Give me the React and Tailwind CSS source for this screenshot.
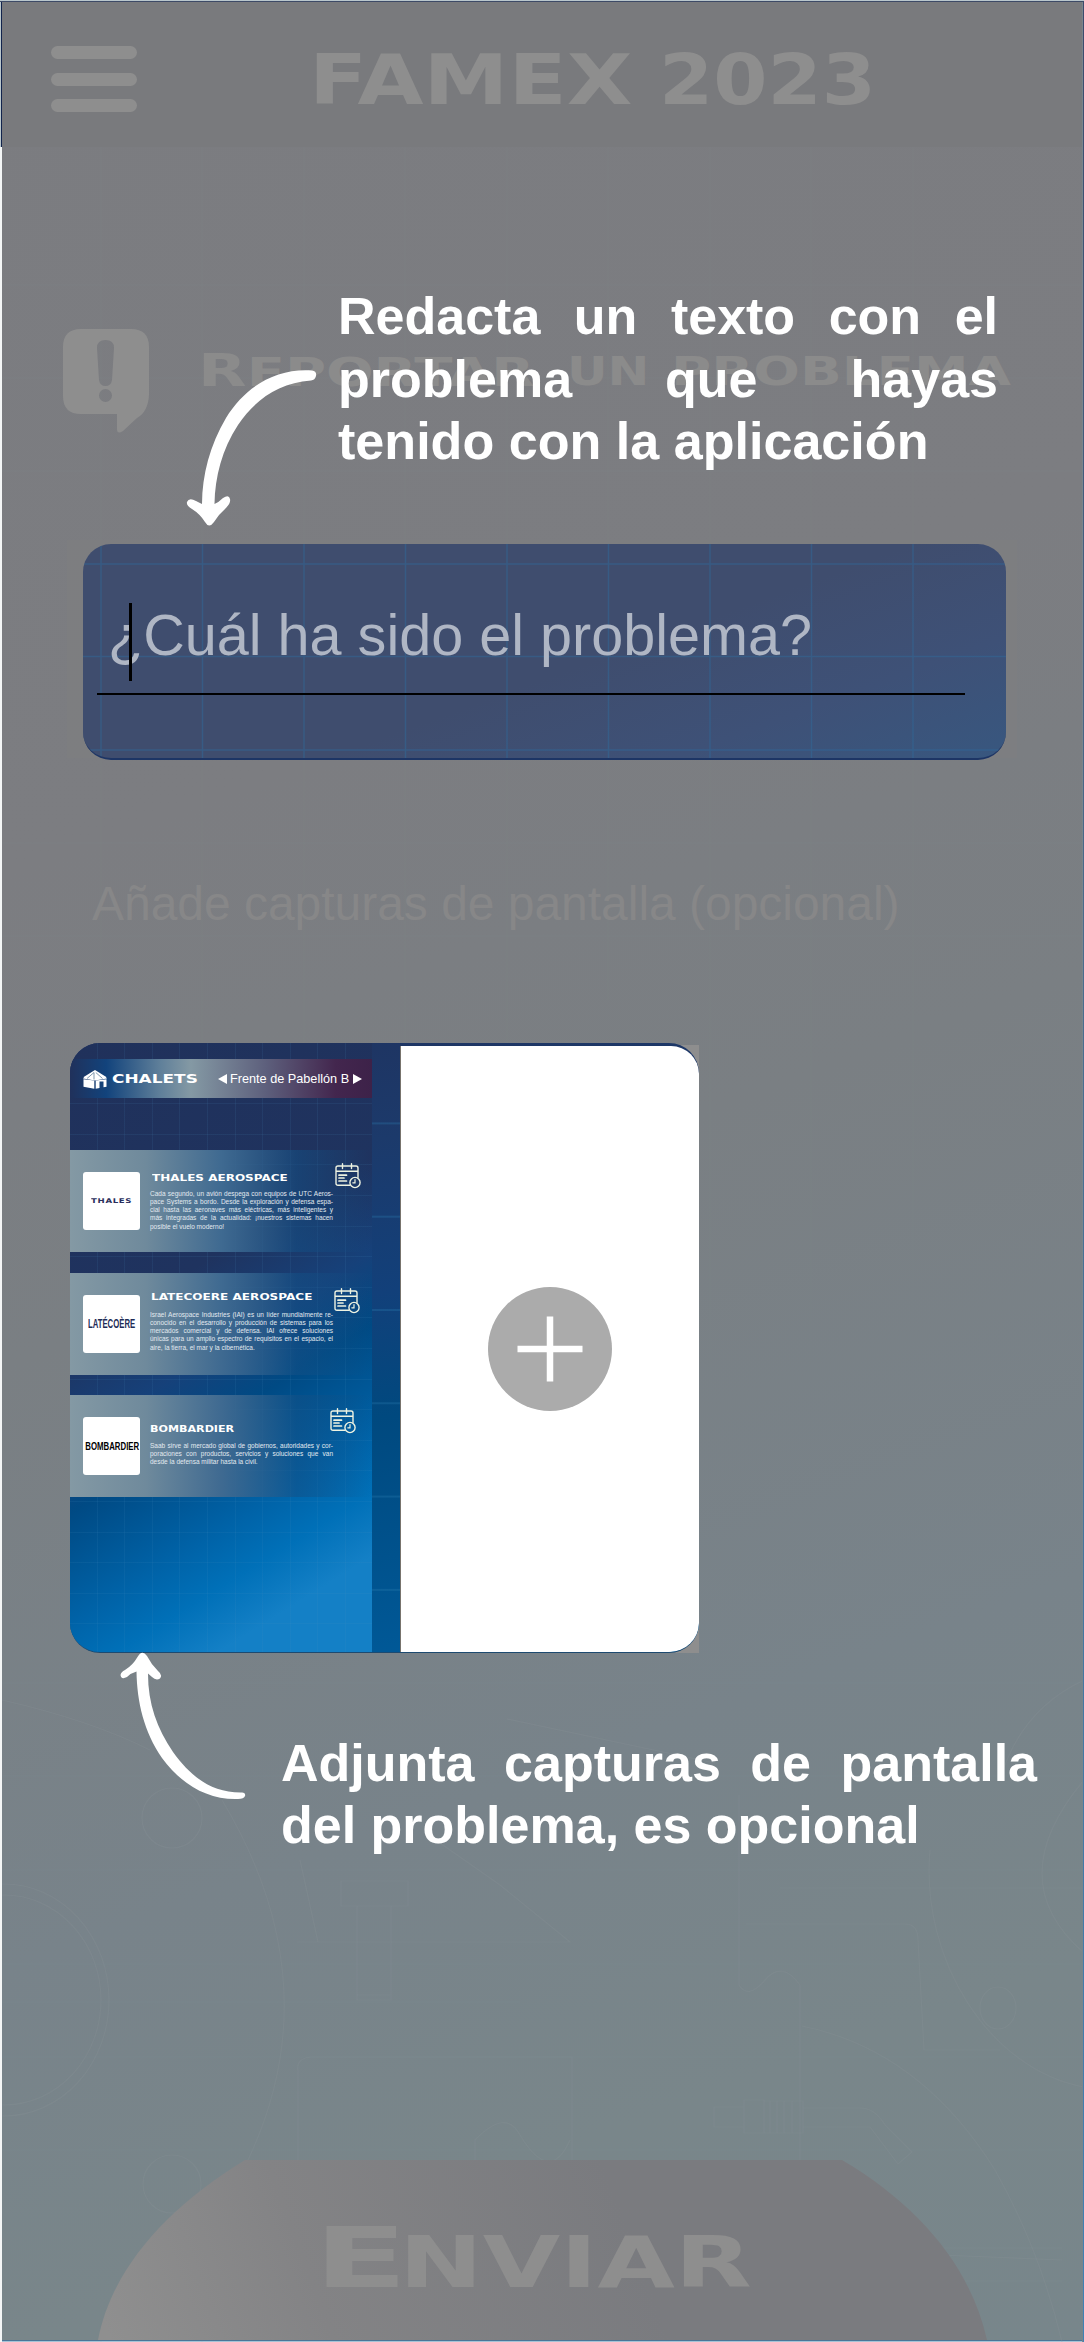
import { useLayoutEffect, useRef, useState } from "react";

/* One line of text stretched horizontally to an exact width. */
function Fit({ width, className = "", children }) {
  const ref = useRef(null);
  const [scale, setScale] = useState(1);
  useLayoutEffect(() => {
    const w = ref.current.offsetWidth;
    if (w) setScale(width / w);
  }, [width]);
  return (
    <span className="block shrink-0" style={{ width }}>
      <span
        ref={ref}
        className={`block w-max origin-left whitespace-nowrap ${className}`}
        style={{ transform: `scaleX(${scale})` }}
      >
        {children}
      </span>
    </span>
  );
}

const wide = "font-['DejaVu_Sans',sans-serif] font-bold";

function BlueprintLines() {
  return (
    <svg className="absolute inset-0" width="1084" height="2342" fill="none" stroke="#8d989c" strokeOpacity="0.22" strokeWidth="1.2">
      <path d="M101 147V2342M202 147V2342M304 147V2080M405 147V1960M507 147V1640M608 147V1000M710 147V1700M811 147V2160M913 147V2160" strokeOpacity="0.08" />
      <path d="M2 285H1082M2 378H1082M2 471H1082M2 843H1082M2 936H1082M2 1683H1082M2 1776H1082M2 1870H1082M2 1964H1082M2 2002H520M2 2057H1082M2 2150H1082" strokeOpacity="0.09" />
      <ellipse cx="4" cy="2000" rx="105" ry="116" />
      <ellipse cx="4" cy="2000" rx="97" ry="105" />
      <circle cx="172" cy="1818" r="30" />
      <circle cx="172" cy="2184" r="29" />
      <path d="M2 1700Q90 1720 150 1750M222 1800C300 1930 300 2050 248 2160M300 1860L318 1942M298 2161V2070Q296 2059 310 2057H572V2161" />
      <path d="M341 1881H408V1906H341ZM357 1906V2000H391V1906M357 1995H391M507 1719L715 1763M440 1843L500 1885L570 1942H297" />
      <path d="M475 2161V2140Q506 2108 520 2135Q550 2185 570 2140" />
      <path d="M739 1795V1985Q748 2000 765 1980Q782 1960 800 1985V2161M746 1924H905Q918 1924 918 1940L924 2050H1000M780 1888H1082M930 1850C920 1960 990 2070 1084 2087M802 2026Q920 2050 995 2170Q1040 2250 1062 2342" />
      <path d="M714 2107H744V2127H714ZM744 2100H764V2133H744ZM764 2101H803V2133H764ZM770 2101V2133M777 2101V2133M784 2101V2133M792 2101V2133M803 2108H860Q875 2108 885 2125L912 2152L898 2164L870 2127H803" />
      <ellipse cx="998" cy="2008" rx="18" ry="21" />
      <path d="M1084 1680Q1020 1710 1000 1780M1084 1780Q1000 1880 1084 1953M940 2248H1062M940 2255L1062 2260M958 2281H1062" />
    </svg>
  );
}

function CalendarIcon({ className }) {
  return (
    <svg className={className} width="27" height="26" viewBox="0 0 27 26" fill="none" stroke="#eef3e2" strokeWidth="1.4" strokeLinecap="round">
      <path d="M15 22.3H3Q1 22.3 1 20.3V5Q1 3 3 3H21Q23 3 23 5V14.5M1 8.2H23M7.5 .8V5.5M16.5 .8V5.5" />
      <path d="M4 12.2H11.5M4 15H9M4 18H11.5" strokeWidth="1.7" />
      <circle cx="20" cy="19.5" r="5.1" />
      <path d="M20 16.5V19.8H17.8" strokeWidth="1.2" />
    </svg>
  );
}

const cards = [
  {
    logo: "THALES",
    logoClass: "text-[6.5px] leading-[10px] tracking-[0.5px] text-[#2a2f5c] font-['DejaVu_Sans',sans-serif] font-bold",
    logoWidth: 41,
    title: "THALES AEROSPACE",
    titleWidth: 136,
    body: "pt-[22px]",
    pad: "pl-[2px]",
    icon: "left-[265px] top-[13px]",
    lines: [
      "Cada segundo, un avión despega con equipos de UTC Aeros-",
      "pace Systems a bordo. Desde la exploración y defensa espa-",
      "cial hasta las aeronaves más eléctricas, más inteligentes y",
      "más integradas de la actualidad: ¡nuestros sistemas hacen",
      "posible el vuelo moderno!",
    ],
    gap: "mt-[6px]",
  },
  {
    logo: "LATÉCOÈRE",
    logoClass: "text-[13px] leading-[14px] text-[#1e2c57] font-['Liberation_Sans',sans-serif] font-bold",
    logoWidth: 47,
    title: "LATECOERE AEROSPACE",
    titleWidth: 162,
    body: "pt-[18px]",
    pad: "pl-[1px]",
    icon: "left-[264px] top-[15px]",
    lines: [
      "Israel Aerospace Industries (IAI) es un líder mundialmente re-",
      "conocido en el desarrollo y producción de sistemas para los",
      "mercados comercial y de defensa. IAI ofrece soluciones",
      "únicas para un amplio espectro de requisitos en el espacio, el",
      "aire, la tierra, el mar y la cibernética.",
    ],
    gap: "mt-[8.5px]",
  },
  {
    logo: "BOMBARDIER",
    logoClass: "pl-[2px] text-[11.5px] leading-[14px] text-black font-['Liberation_Sans',sans-serif] font-bold",
    logoWidth: 55,
    title: "BOMBARDIER",
    titleWidth: 84,
    body: "pt-[28px]",
    pad: "pl-0",
    icon: "left-[260px] top-[13px]",
    lines: [
      "Saab sirve al mercado global de gobiernos, autoridades y cor-",
      "poraciones con productos, servicios y soluciones que van",
      "desde la defensa militar hasta la civil.",
    ],
    gap: "mt-[7px]",
  },
];

function ChaletCard({ c }) {
  return (
    <div className="relative flex h-[102px] w-[302px] bg-[linear-gradient(90deg,#8499a4_0%,#6f8a9c_25%,#3f6a91_50%,#13508688_75%,#0a4a8400_100%)]">
      <div className="ml-[13px] mt-[22px] flex h-[58px] w-[57px] items-center justify-center rounded-[3px] bg-white">
        <Fit width={c.logoWidth} className={c.logoClass}>{c.logo}</Fit>
      </div>
      <div className={`ml-[10px] flex w-[183px] flex-col ${c.body}`}>
        <div className={c.pad}>
          <Fit width={c.titleWidth} className={`${wide} text-[9px] leading-[12px] text-white`}>{c.title}</Fit>
        </div>
        <div className={`flex flex-col font-['Liberation_Sans',sans-serif] text-[6.5px] leading-[8.15px] text-[#e3eaf0] ${c.gap}`}>
          {c.lines.map((l, i) => (
            <div key={i} className={i < c.lines.length - 1 ? "whitespace-nowrap [text-align-last:justify]" : "whitespace-nowrap"}>{l}</div>
          ))}
        </div>
      </div>
      <CalendarIcon className={`absolute ${c.icon}`} />
    </div>
  );
}

function Screenshot() {
  return (
    <div className="relative flex w-[302px] flex-col bg-[linear-gradient(148deg,#20315b_0%,#1f335f_38%,#16417a_50%,#004a84_59%,#0063a8_73%,#0070b8_80%,#1480c6_88%)]">
      <div className="absolute inset-0 bg-[repeating-linear-gradient(90deg,transparent_0_26.6px,#4a90c01c_26.6px_27.6px),repeating-linear-gradient(180deg,transparent_0_29.6px,#4a90c01c_29.6px_30.6px)]" />
      <div className="relative mt-[16px] flex h-[39px] items-center bg-[linear-gradient(90deg,#20315b_0%,#12437c_12%,#60809a_30%,#8499a4_40%,#5d5f7c_65%,#43264e_88%,#3d2249_100%)] pl-[13px]">
        <svg className="mt-[2px]" width="24" height="19" viewBox="0 0 24 19" fill="#fff">
          <path d="M12 0L22.500 6.500L24 8.500L12 10.500L0 8.500L1.500 6.500Z" />
          <path d="M.5 9.2L11.300 10.500V18.700L.5 16.800ZM12.700 10.500L23.500 9.200V16.800L20.500 17.300V11.500H16.500V18L12.700 18.700Z" />
          <path d="M4 8.500L11 2.500V9.500M12.800 2.500L19.500 8.500" stroke="#5f7f9b" strokeWidth=".8" fill="none" />
        </svg>
        <div className="ml-[5px] mt-px">
          <Fit width={86} className={`${wide} text-[13px] leading-[18px] text-white`}>CHALETS</Fit>
        </div>
        <svg className="ml-[20px]" width="9" height="10" viewBox="0 0 9 10" fill="#fff"><path d="M0 5L9 0V10Z" /></svg>
        <div className="ml-[3px]">
          <Fit width={119} className="font-['Liberation_Sans',sans-serif] text-[13px] leading-[18px] text-white">Frente de Pabellón B</Fit>
        </div>
        <svg className="ml-[4px]" width="9" height="10" viewBox="0 0 9 10" fill="#fff"><path d="M9 5L0 0V10Z" /></svg>
      </div>
      <div className="relative mt-[52px] flex flex-col gap-[20.5px]">
        {cards.map((c) => <ChaletCard key={c.title} c={c} />)}
      </div>
    </div>
  );
}

export default function App() {
  return (
    <div className="relative flex h-[2342px] w-[1084px] flex-col overflow-hidden bg-[linear-gradient(160deg,#7b7c80_0%,#7c7d81_32%,#7a7f83_50%,#78838a_72%,#79868a_86%,#78868b_100%)] font-['Liberation_Sans',sans-serif]">
      <BlueprintLines />

      <header className="relative flex h-[147px] shrink-0 items-start bg-[#797a7d]">
        <div className="ml-[51px] mt-[46px] flex w-[86px] flex-col gap-[13.5px]">
          <div className="h-[13px] rounded-full bg-[#8e8e8e]" />
          <div className="h-[13px] rounded-full bg-[#8e8e8e]" />
          <div className="h-[13px] rounded-full bg-[#8e8e8e]" />
        </div>
        <div className="ml-[172px] mt-[40px] flex gap-[26px]">
          <Fit width={324} className={`${wide} text-[69px] leading-[80px] text-[#8e8e8e]`}>FAMEX</Fit>
          <Fit width={217} className={`${wide} text-[69px] leading-[80px] text-[#8e8e8e]`}>2023</Fit>
        </div>
      </header>

      <section className="relative mt-[182px] flex h-[105px] shrink-0 items-start pl-[63px]">
        <svg width="86" height="104" viewBox="0 0 86 104" fill="#8e8e8e">
          <path fillRule="evenodd" d="M18 0H68Q86 0 86 18V66Q85 83 74 89L60 102Q54 106 54 100V85H18Q0 85 0 67V18Q0 0 18 0ZM34 19Q34 11 42.500 11Q51 11 51 19L49 51Q48 57 42.500 57Q37 57 36 51ZM42.500 60A6.500 6.500 0 1 0 42.500 73A6.500 6.500 0 1 0 42.500 60Z" />
        </svg>
        <div className={`ml-[49px] mt-[16px] flex ${wide} leading-[52px] text-[#8b8b8b]`}>
          <Fit width={336} className="text-[39px]"><span className="text-[44px]">R</span>EPORTAR</Fit>
          <span className="w-[33px]" />
          <Fit width={82} className="text-[39px] pt-[1px]">UN</Fit>
          <span className="w-[22px]" />
          <Fit width={340} className="text-[39px] pt-[1px]">PROBLEMA</Fit>
        </div>
      </section>

      <section className="relative ml-[67px] mt-[106px] h-[218px] w-[950px] shrink-0 bg-[#7f7f81]/60 pl-[16px] pt-[4px]">
        <div className="relative flex h-[216px] w-[923px] flex-col overflow-hidden rounded-[28px] border-b-2 border-[#1d3565] bg-[linear-gradient(160deg,#3f4d6e_0%,#3f4d6e_55%,#3e5177_78%,#38577f_100%)]">
          <svg className="absolute inset-0" width="923" height="216" stroke="#2f6a99" strokeOpacity=".5" strokeWidth="1.5">
            <path d="M18 0V216M119.500 0V216M221 0V216M322.500 0V216M424 0V216M525.500 0V216M627 0V216M728.500 0V216M830 0V216M0 20H923M0 112.500H923M0 206H923" />
          </svg>
          <div className="relative ml-[25px] mt-[51px] h-[80px]">
            <Fit width={704} className="text-[57px] leading-[80px] text-[#afb6c4]">¿Cuál ha sido el problema?</Fit>
            <div className="absolute left-[21px] top-[8px] h-[78px] w-[3px] bg-black" />
          </div>
          <div className="relative ml-[14px] mt-[17.500px] h-[2.500px] w-[868px] bg-black" />
        </div>
      </section>

      <div className="relative ml-[92px] mt-[116px] h-[60px] shrink-0">
        <Fit width={808} className="text-[48px] leading-[60px] text-[#878788]">Añade capturas de pantalla (opcional)</Fit>
      </div>

      <section className="relative ml-[70px] mt-[109px] flex h-[610px] w-[629px] shrink-0 rounded-l-[30px] bg-[linear-gradient(180deg,transparent_0_2px,#8e8e8e_2px)]">
        <div className="flex h-[610px] w-[629px] overflow-hidden rounded-[30px] border-b-[1.5px] border-b-[#1d4a70] bg-[linear-gradient(172deg,#1f3360_0%,#1c3a6b_20%,#12407a_42%,#00497f_60%,#005b9b_100%)]">
          <Screenshot />
          <div className="h-full w-[28px] bg-[repeating-linear-gradient(180deg,transparent_0_79.500px,#2b7db04d_79.500px_81px,transparent_81px_93.300px)] [background-size:28px_93.300px]" />
          <div className="mt-[2.500px] flex flex-1 items-center justify-center rounded-r-[28px] border-l border-[#77736c] bg-white">
            <svg width="124" height="124" viewBox="0 0 124 124">
              <circle cx="62" cy="62" r="62" fill="#ababab" />
              <path d="M29.500 62H94.500M62 29.500V94.500" stroke="#fff" strokeWidth="6.500" />
            </svg>
          </div>
        </div>
      </section>

      <div className="flex-1" />

      <footer className="relative ml-[98px] flex h-[180px] w-[889px] shrink-0">
        <svg className="absolute inset-0" width="889" height="180" viewBox="0 0 889 180">
          <defs>
            <linearGradient id="btn" gradientUnits="userSpaceOnUse" x1="10" y1="175" x2="500" y2="-10">
              <stop offset="0" stopColor="#8f8f8f" />
              <stop offset=".4" stopColor="#838385" />
              <stop offset="1" stopColor="#7a7b7f" />
            </linearGradient>
          </defs>
          <path d="M0 180C13 112 65 50 147 0H744C822 46 873 108 889 180Z" fill="url(#btn)" />
        </svg>
        <div className={`relative ml-[216px] mt-[49px] flex ${wide} leading-[100px] text-[#8e8e8e]`}>
          <Fit width={94} className="text-[83px]">E</Fit>
          <div className="-ml-[9px]">
            <Fit width={353} className="pt-[3px] text-[72px]">NVIAR</Fit>
          </div>
        </div>
      </footer>
      <div className="h-[2px] shrink-0 border-t border-[#4a7698] bg-[#a6c3d6]" />

      {/* Guide annotations over the dimmed page */}
      <div className="absolute left-[338px] top-[285px] w-[660px] text-[52px] font-bold leading-[62.500px] text-white">
        <div className="[text-align-last:justify]">Redacta un texto con el</div>
        <div className="[text-align-last:justify]">problema que hayas</div>
        <Fit width={590}>tenido con la aplicación</Fit>
      </div>
      <svg className="absolute left-[180px] top-[365px]" width="145" height="170" viewBox="0 0 145 170">
        <path d="M132 5.500Q137 6 136 11Q135 15 131 15.500C98 18 75 35 58 60C42 84 35 112 34.500 139Q39 137 43 133Q49 129 50 134Q51 138 46 143Q39 149 34 157Q29 164 25 157Q20 149 12 144Q6 141 7 137Q9 132 16 136L22 139C22 110 30 80 46 53C66 20 98 3 132 5.500Z" fill="#fff" />
      </svg>

      <svg className="absolute left-[116px] top-[1648px]" width="135" height="155" viewBox="0 0 135 155">
        <path d="M20.500 23.500Q15 25 11 29Q5 32 4.500 27Q5 24 9 22Q17 17 21.500 9Q26 1 31 8Q35 16 42 23Q47 27 44 30.500Q40 33 36 29L32 25.500C32 56 41 80 57 104C75 129 96 145 126 144.500Q130 145 129 148Q128 151 122 151C92 152 66 137 46 110C28 84 21 54 20.500 23.500Z" fill="#fff" />
      </svg>
      <div className="absolute left-[281px] top-[1732px] w-[756px] text-[52px] font-bold leading-[62px] text-white">
        <div className="[text-align-last:justify]">Adjunta capturas de pantalla</div>
        <Fit width={639}>del problema, es opcional</Fit>
      </div>

      {/* Thin frame around the page */}
      <div className="absolute inset-x-0 top-0 h-[2px] border-b border-[#3d4a66] bg-[#b9c6cc]" />
      <div className="absolute left-0 top-[2px] flex h-[2340px] w-[2px] flex-col">
        <div className="h-[145px] border-r border-[#12244d] bg-[#b9c6cc]" />
        <div className="flex-1 bg-[#f4f6f6]" />
      </div>
      <div className="absolute right-0 top-[2px] h-[2340px] w-[2px] border-l border-[#79858c] bg-[linear-gradient(180deg,#3b4a6c,#4a6b8c_40%,#3f82b5)]" />
    </div>
  );
}
